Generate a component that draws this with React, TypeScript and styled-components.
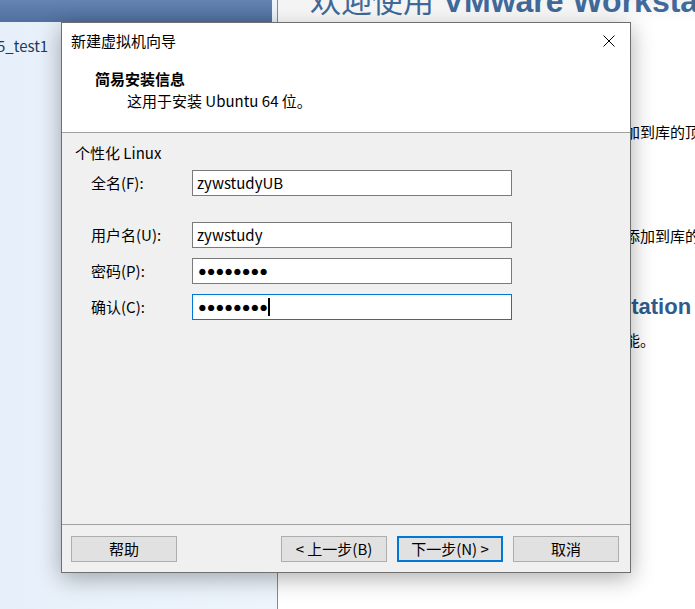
import React from "react";
import styled, { createGlobalStyle } from "styled-components";

const GlobalStyle = createGlobalStyle`
  html, body { margin: 0; padding: 0; width: 695px; height: 609px; overflow: hidden; background: #fff; }
  body { font-family: "Noto Sans CJK SC", "Noto Sans", sans-serif; font-size: 15px; color: #000; }
  * { box-sizing: border-box; }
`;

const Desktop = styled.div`
  position: relative;
  display: flex;
  width: 695px;
  height: 609px;
  overflow: hidden;
`;

/* ---------- background: library + home page ---------- */

const Library = styled.aside`
  flex: none;
  width: 278px;
  display: flex;
  flex-direction: column;
  background: linear-gradient(90deg, #e7f0fa 0%, #edf4fc 100%);
  border-right: 1px solid #8a8a8a;
`;

const LibraryBar = styled.div`
  height: 22px;
  margin-right: 5px;
  background: linear-gradient(#6683b2, #50709f);
`;

const LibraryItem = styled.div`
  margin: 14px 0 0 -3px;
  line-height: 20px;
  color: #1b3a60;
  white-space: nowrap;
`;

const Home = styled.main`
  flex: 1;
  min-width: 0;
  display: flex;
  flex-direction: column;
  padding-left: 32px;
  background: linear-gradient(#f3f3f3 0px, #ffffff 22px, #ffffff 100%);
  white-space: nowrap;
  overflow: hidden;
`;

const WelcomeTitle = styled.h1`
  margin: -17px 0 0 0;
  font-family: "Liberation Sans", "Noto Sans CJK SC", sans-serif;
  font-weight: 400;
  font-size: 31px;
  line-height: 36px;
  color: #41699a;
`;

const Brand = styled.b`
  font-weight: 700;
  font-size: 32px;
`;

const Section = styled.section<{ $top: number }>`
  margin: ${(p) => p.$top}px 0 0 30px;
`;

const SectionTitle = styled.h2<{ $shift?: number }>`
  margin: 0 0 0 ${(p) => p.$shift ?? 0}px;
  font-family: "Liberation Sans", "Noto Sans CJK SC", sans-serif;
  font-size: 22px;
  font-weight: 700;
  line-height: 30px;
  color: #2e5c8c;
`;

const SectionText = styled.p`
  margin: 8px 0 0 0;
  line-height: 20px;
  color: #000;
`;

/* ---------- wizard dialog ---------- */

const Dialog = styled.div`
  position: absolute;
  left: 61px;
  top: 22px;
  width: 570px;
  height: 551px;
  display: flex;
  flex-direction: column;
  background: #f0f0f0;
  border: 1px solid #6f6f6f;
  box-shadow: 0 5px 22px rgba(0, 0, 0, 0.33);
`;

const TitleBar = styled.div`
  height: 36px;
  flex: none;
  display: flex;
  align-items: center;
  justify-content: space-between;
  padding: 0 15px 0 9px;
  background: #fff;
  line-height: 20px;
`;

const CloseIcon = styled.svg`
  display: block;
  width: 12px;
  height: 12px;
`;

const Header = styled.div`
  height: 74px;
  flex: none;
  padding: 10px 0 0 33px;
  background: #fff;
  border-bottom: 1px solid #a0a0a0;
`;

const HeaderTitle = styled.div`
  font-weight: 700;
  line-height: 20px;
`;

const HeaderText = styled.div`
  margin-top: 2px;
  padding-left: 32px;
  line-height: 20px;
`;

const Body = styled.div`
  flex: 1;
  display: flex;
  flex-direction: column;
  padding: 10px 0 0 13px;
`;

const GroupLabel = styled.div`
  line-height: 20px;
`;

const Form = styled.div`
  display: flex;
  flex-direction: column;
  gap: 10px;
  margin-top: 7px;
  padding-left: 16px;
`;

const FieldRow = styled.div<{ $offset?: number }>`
  display: grid;
  grid-template-columns: 101px 320px;
  align-items: center;
  margin-top: ${(p) => p.$offset ?? 0}px;
`;

const FieldLabel = styled.label`
  line-height: 20px;
`;

const TextBox = styled.div<{ $focused?: boolean }>`
  height: 26px;
  display: flex;
  align-items: center;
  padding-left: 4px;
  background: #fff;
  border: 1px solid ${(p) => (p.$focused ? "#0078d7" : "#7a7a7a")};
  line-height: 20px;
`;

const Dots = styled.span`
  font-family: "Liberation Sans", "DejaVu Sans", sans-serif;
  font-size: 14.5px;
  line-height: 16px;
  padding-left: 1px;
`;

const Caret = styled.span`
  display: inline-block;
  width: 2px;
  height: 18px;
  background: #000;
`;

const Footer = styled.div`
  height: 48px;
  flex: none;
  display: flex;
  gap: 10px;
  padding: 11px 11px 0 9px;
  border-top: 1px solid #a0a0a0;
`;

const Button = styled.button<{ $default?: boolean; $push?: boolean }>`
  width: 106px;
  height: 26px;
  padding: 0;
  margin-right: ${(p) => (p.$push ? "auto" : "0")};
  font-family: inherit;
  font-size: 15px;
  line-height: 20px;
  color: #000;
  background: #e1e1e1;
  border: ${(p) => (p.$default ? "2px solid #0078d7" : "1px solid #adadad")};
  border-radius: 0;
`;

export default function App() {
  return (
    <>
      <GlobalStyle />
      <Desktop>
        <Library>
          <LibraryBar />
          <LibraryItem>5_test1</LibraryItem>
        </Library>
        <Home>
          <WelcomeTitle>
            欢迎使用 <Brand>VMware Workstation 12 Pro</Brand>
          </WelcomeTitle>
          <Section $top={64}>
            <SectionTitle>创建新的虚拟机</SectionTitle>
            <SectionText>创建一个新的虚拟机，然后将这个虚拟机添加到库的顶部。</SectionText>
          </Section>
          <Section $top={46}>
            <SectionTitle>打开虚拟机</SectionTitle>
            <SectionText>打开一个现有的虚拟机，然后将这个虚拟机添加到库的顶部。</SectionText>
          </Section>
          <Section $top={46}>
            <SectionTitle $shift={-3}>获取最新版本 VMware Workstation Pro</SectionTitle>
            <SectionText>将产品升级到专业版本，从而获得更多的功能。</SectionText>
          </Section>
        </Home>

        <Dialog role="dialog" aria-label="新建虚拟机向导">
          <TitleBar>
            <span>新建虚拟机向导</span>
            <CloseIcon viewBox="0 0 12 12" aria-label="关闭">
              <path d="M0.5 0.5L11.5 11.5M11.5 0.5L0.5 11.5" stroke="#000" strokeWidth="1" fill="none" />
            </CloseIcon>
          </TitleBar>
          <Header>
            <HeaderTitle>简易安装信息</HeaderTitle>
            <HeaderText>这用于安装 Ubuntu 64 位。</HeaderText>
          </Header>
          <Body>
            <GroupLabel>个性化 Linux</GroupLabel>
            <Form>
              <FieldRow>
                <FieldLabel>全名(F):</FieldLabel>
                <TextBox>zywstudyUB</TextBox>
              </FieldRow>
              <FieldRow $offset={16}>
                <FieldLabel>用户名(U):</FieldLabel>
                <TextBox>zywstudy</TextBox>
              </FieldRow>
              <FieldRow>
                <FieldLabel>密码(P):</FieldLabel>
                <TextBox>
                  <Dots>●●●●●●●●</Dots>
                </TextBox>
              </FieldRow>
              <FieldRow>
                <FieldLabel>确认(C):</FieldLabel>
                <TextBox $focused>
                  <Dots>●●●●●●●●</Dots>
                  <Caret />
                </TextBox>
              </FieldRow>
            </Form>
          </Body>
          <Footer>
            <Button $push>帮助</Button>
            <Button>&lt; 上一步(B)</Button>
            <Button $default>下一步(N) &gt;</Button>
            <Button>取消</Button>
          </Footer>
        </Dialog>
      </Desktop>
    </>
  );
}
